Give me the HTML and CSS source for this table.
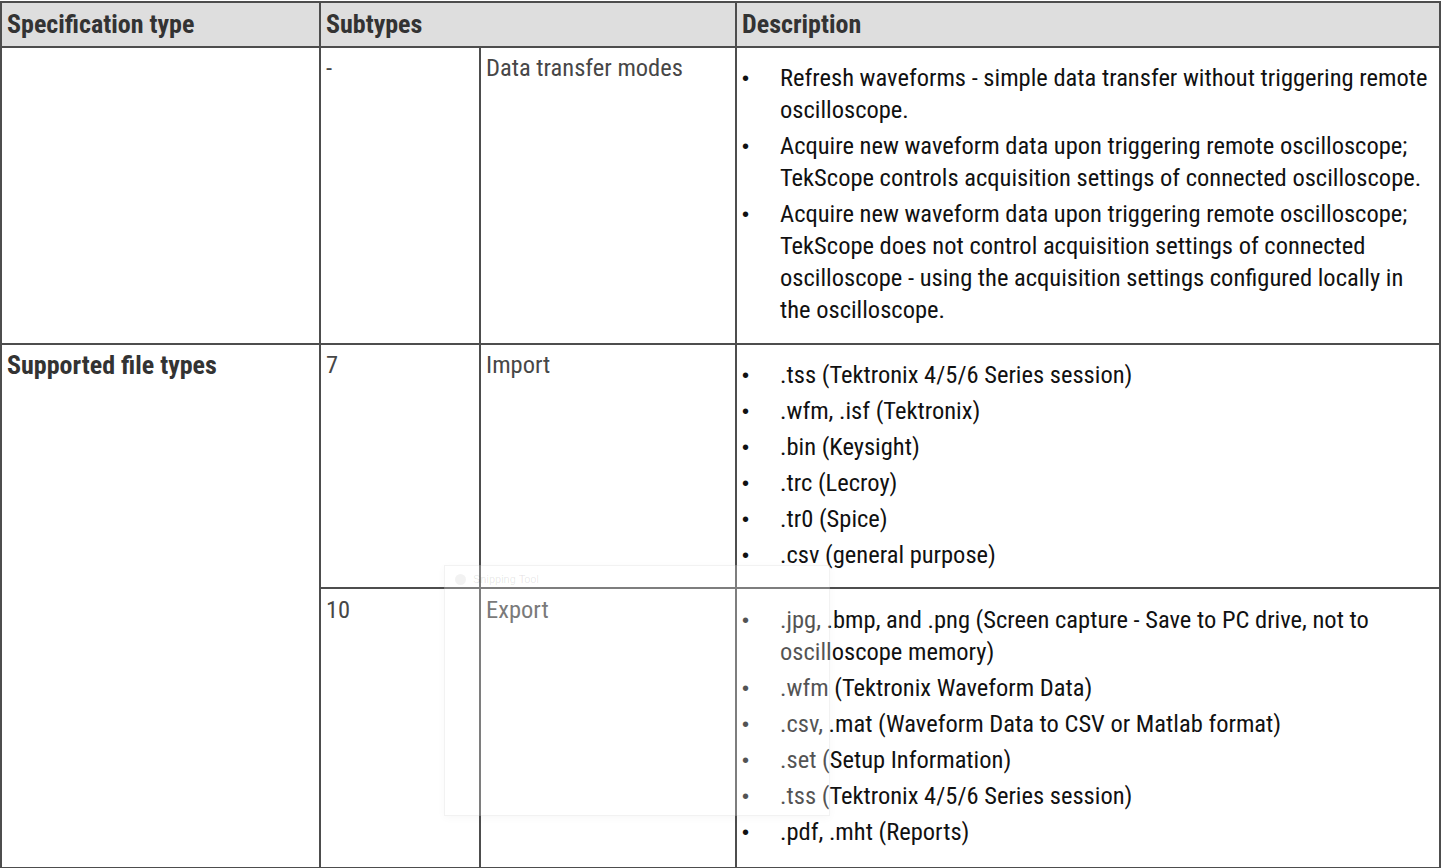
FILE: index.html
```html
<!DOCTYPE html>
<html>
<head>
<meta charset="utf-8">
<link rel="stylesheet" href="styles.css">
</head>
<body>
<div class="page">
<table class="spec">
  <colgroup>
    <col class="c1"><col class="c2"><col class="c3"><col class="c4">
  </colgroup>
  <thead>
    <tr class="head">
      <th>Specification type</th>
      <th colspan="2">Subtypes</th>
      <th>Description</th>
    </tr>
  </thead>
  <tbody>
    <tr class="r1">
      <td></td>
      <td class="sub">-</td>
      <td class="sub">Data transfer modes</td>
      <td class="desc">
        <ul>
          <li>Refresh waveforms - simple data transfer without triggering remote oscilloscope.</li>
          <li>Acquire new waveform data upon triggering remote oscilloscope; TekScope controls acquisition settings of connected oscilloscope.</li>
          <li>Acquire new waveform data upon triggering remote oscilloscope; TekScope does not control acquisition settings of connected oscilloscope - using the acquisition settings configured locally in the oscilloscope.</li>
        </ul>
      </td>
    </tr>
    <tr class="r2">
      <td rowspan="2" class="type">Supported file types</td>
      <td class="sub">7</td>
      <td class="sub">Import</td>
      <td class="desc">
        <ul>
          <li>.tss (Tektronix 4/5/6 Series session)</li>
          <li>.wfm, .isf (Tektronix)</li>
          <li>.bin (Keysight)</li>
          <li>.trc (Lecroy)</li>
          <li>.tr0 (Spice)</li>
          <li>.csv (general purpose)</li>
        </ul>
      </td>
    </tr>
    <tr class="r3">
      <td class="sub">10</td>
      <td class="sub">Export</td>
      <td class="desc">
        <ul>
          <li>.jpg, .bmp, and .png (Screen capture - Save to PC drive, not to oscilloscope memory)</li>
          <li>.wfm (Tektronix Waveform Data)</li>
          <li>.csv, .mat (Waveform Data to CSV or Matlab format)</li>
          <li>.set (Setup Information)</li>
          <li>.tss (Tektronix 4/5/6 Series session)</li>
          <li>.pdf, .mht (Reports)</li>
        </ul>
      </td>
    </tr>
  </tbody>
</table>
<div class="ghost">
  <div class="ghost-title"><span class="ghost-icon"></span>Snipping Tool</div>
</div>
</div>
</body>
</html>
```
FILE: styles.css
```css
html, body {
  margin: 0;
  padding: 0;
  background: #fff;
}
.page {
  position: relative;
  width: 1443px;
  height: 868px;
  overflow: hidden;
}
.spec {
  border-collapse: collapse;
  table-layout: fixed;
  width: 1439px;
  margin-top: 1px;
  font-family: "Roboto Condensed", "Liberation Sans", sans-serif;
  font-size: 24.5px;
  line-height: 32px;
}
.c1 { width: 319px; }
.c2 { width: 160px; }
.c3 { width: 256px; }
.c4 { width: 704px; }
.spec th, .spec td {
  border: 2px solid #4d4d4d;
  vertical-align: top;
  text-align: left;
  padding: 4px 5px 0 5px;
}
.spec tbody tr td { border-top-color: #222; }
.head th {
  background: #dedede;
  color: #333;
  font-weight: bold;
  font-size: 26px;
  height: 38px;
  padding-top: 5px;
  padding-bottom: 0;
}
.r1 td { height: 291px; }
.r2 td { height: 238px; }
.r3 td { height: 273px; padding-top: 5px; }
.sub { color: #474747; }
.type { color: #333; font-weight: bold; font-size: 26px; }
.desc { color: #111; }
.desc ul {
  list-style: none;
  margin: 10px 0 0 0;
  padding: 0;
}
.desc li {
  display: flex;
  margin-bottom: 4px;
}
.desc li::before {
  content: "\2022";
  flex: 0 0 38px;
  font-family: "Liberation Sans", sans-serif;
  font-size: 20px;
  padding-left: 0;
  box-sizing: border-box;
}
.ghost {
  position: absolute;
  left: 444px;
  top: 565px;
  width: 384px;
  height: 249px;
  background: rgba(255, 255, 255, 0.28);
  border: 1px solid rgba(0, 0, 0, 0.05);
  box-shadow: 0 2px 8px rgba(0, 0, 0, 0.03);
}
.ghost-title {
  display: flex;
  align-items: center;
  gap: 7px;
  padding: 7px 0 0 10px;
  font-family: "Liberation Sans", sans-serif;
  font-size: 11px;
  color: rgba(0, 0, 0, 0.1);
}
.ghost-icon {
  width: 11px;
  height: 11px;
  border-radius: 50%;
  background: rgba(0, 0, 0, 0.05);
}
```
